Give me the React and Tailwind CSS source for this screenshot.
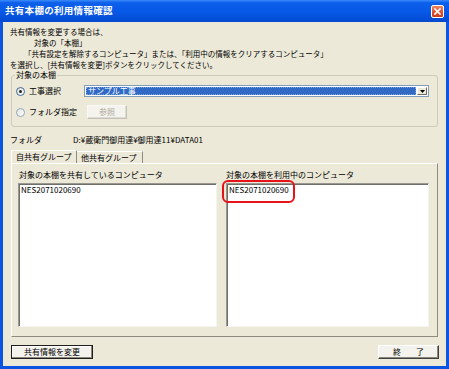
export default function App() {
  return (
    <div className="w-[449px] h-[369px] flex flex-col overflow-hidden bg-[#0c55e2] font-['Noto_Sans_CJK_JP','Noto_Sans_CJK_SC',sans-serif] text-black">
      {/* title bar */}
      <div className="h-[22px] shrink-0 flex items-center pl-[5px] pr-[5px] bg-[linear-gradient(to_bottom,#3a8cfb_0%,#0d60ea_12%,#0758e6_55%,#0449cf_100%)]">
        <span className="text-white font-bold text-[9.5px] leading-none tracking-[0.3px]">共有本棚の利用情報確認</span>
        <div className="ml-auto w-[13px] h-[13px] rounded-[2px] border border-white bg-[linear-gradient(to_bottom,#ef8563_0%,#dc5330_55%,#c63d1c_100%)] flex items-center justify-center">
          <svg width="7" height="7" viewBox="0 0 7 7">
            <path d="M1 1 L6 6 M6 1 L1 6" stroke="#ffffff" strokeWidth="1.6" strokeLinecap="square" />
          </svg>
        </div>
      </div>

      {/* content */}
      <div className="flex-1 mx-[3px] mb-[3px] bg-[#ece9d8] flex flex-col text-[8px] leading-[10.5px]">
        {/* description */}
        <div className="pt-[4px] pl-[7px] whitespace-nowrap text-[7.5px] leading-[11px]">
          <div>共有情報を変更する場合は、</div>
          <div className="pl-[24px]">対象の「本棚」</div>
          <div className="pl-[14px]">「共有設定を解除するコンピュータ」または、「利用中の情報をクリアするコンピュータ」</div>
          <div>を選択し、[共有情報を変更]ボタンをクリックしてください。</div>
        </div>

        {/* group box */}
        <fieldset className="mx-[8px] border border-[#cdcbb9] rounded-[3px] px-0 pb-[7px]">
          <legend className="ml-[3px] px-[1px] leading-[10px]">対象の本棚</legend>
          <div className="mt-[4px] h-[14px] flex items-center pl-[4px] pr-[8px]">
            <div className="w-[68px] flex items-center gap-[4px]">
              <div className="w-[9px] h-[9px] rounded-full border border-[#3d6a9a] bg-[linear-gradient(135deg,#dcdad0,#ffffff)] flex items-center justify-center">
                <div className="w-[3px] h-[3px] rounded-full bg-[#1e2a1e]"></div>
              </div>
              <span className="whitespace-nowrap">工事選択</span>
            </div>
            <div className="flex-1 h-[12px] flex border border-[#7f9db9] bg-white p-[1px]">
              <div className="flex-1 bg-[#316ac5] text-white flex items-center pl-[1px] leading-none border border-dotted border-[#7f9fd8]">サンプル工事</div>
              <div className="w-[10px] ml-[1px] bg-[#ece9d8] border border-t-white border-l-white border-r-[#716f64] border-b-[#716f64] flex items-center justify-center">
                <svg width="5" height="3" viewBox="0 0 5 3">
                  <path d="M0 0 H5 L2.5 3 Z" fill="#000" />
                </svg>
              </div>
            </div>
          </div>
          <div className="mt-[7px] h-[14px] flex items-center pl-[4px] pr-[8px]">
            <div className="w-[68px] flex items-center gap-[4px]">
              <div className="w-[9px] h-[9px] rounded-full border border-[#8fa6bf] bg-[linear-gradient(135deg,#e4e2d8,#ffffff)]"></div>
              <span className="whitespace-nowrap">フォルダ指定</span>
            </div>
            <div className="ml-[3px] w-[40px] h-[14px] flex items-center justify-center text-[#aca899] bg-[#f4f3ee] border border-t-[#f8f8f4] border-l-[#f8f8f4] border-r-[#c4c2b6] border-b-[#c4c2b6] shadow-[inset_-1px_-1px_0_#dedcd2]">参照</div>
          </div>
        </fieldset>

        {/* folder */}
        <div className="mt-[8px] h-[10px] flex items-center pl-[7px] leading-[10px] whitespace-nowrap">
          <span className="w-[63px]">フォルダ</span>
          <span>D:¥蔵衛門御用達¥御用達11¥DATA01</span>
        </div>

        {/* tabs */}
        <div className="mt-[5px] mx-[8px] h-[13px] flex items-end">
          <div className="w-[66px] h-[13px] flex items-center pl-[4px] border-l border-t border-r border-l-white border-t-white border-r-[#8e8c80] leading-none whitespace-nowrap">自共有グループ</div>
          <div className="w-[66px] h-[12px] flex items-center pl-[4px] border-t border-r border-t-white border-r-[#8e8c80] leading-none whitespace-nowrap">他共有グループ</div>
        </div>

        {/* tab panel */}
        <div className="mx-[8px] h-[174px] border border-l-white border-t-white border-r-[#8e8c80] border-b-[#8e8c80] pl-[6px] pr-[8px] pt-[6px]">
          <div className="grid grid-cols-[199px_203px] gap-x-[9px]">
            <div className="pl-[1px] leading-[10px] whitespace-nowrap">対象の本棚を共有しているコンピュータ</div>
            <div className="leading-[10px] whitespace-nowrap">対象の本棚を利用中のコンピュータ</div>
            <div className="mt-[3px] h-[144px] bg-white border border-t-[#9a988e] border-l-[#9a988e] border-r-[#f4f4f0] border-b-[#f4f4f0] shadow-[inset_1px_1px_0_#6e6e6a] pl-[2px] pt-[1px] leading-[10px]">
              NES2071020690
            </div>
            <div className="relative mt-[3px] h-[144px] bg-white border border-t-[#9a988e] border-l-[#9a988e] border-r-[#f4f4f0] border-b-[#f4f4f0] shadow-[inset_1px_1px_0_#6e6e6a] pl-[2px] pt-[1px] leading-[10px]">
              NES2071020690
              <div className="absolute left-[-5px] top-[-4px] w-[73px] h-[23px] border-2 border-[#e8121a] rounded-[6px]"></div>
            </div>
          </div>
        </div>

        {/* buttons */}
        <div className="mt-[8px] h-[14px] flex justify-between pl-[8px] pr-[7px]">
          <div className="w-[82px] h-[14px] flex items-center justify-center bg-[#f3f2ec] border border-[#1e1e1e] shadow-[inset_-1px_-1px_0_#8a887c,inset_1px_1px_0_#ffffff] leading-none whitespace-nowrap">共有情報を変更</div>
          <div className="w-[61px] h-[14px] flex items-center justify-center gap-[15px] bg-[#f3f2ec] border border-t-[#ffffff] border-l-[#ffffff] border-r-[#404040] border-b-[#404040] shadow-[inset_-1px_-1px_0_#8a887c] leading-none">
            <span>終</span>
            <span>了</span>
          </div>
        </div>
      </div>
    </div>
  );
}
